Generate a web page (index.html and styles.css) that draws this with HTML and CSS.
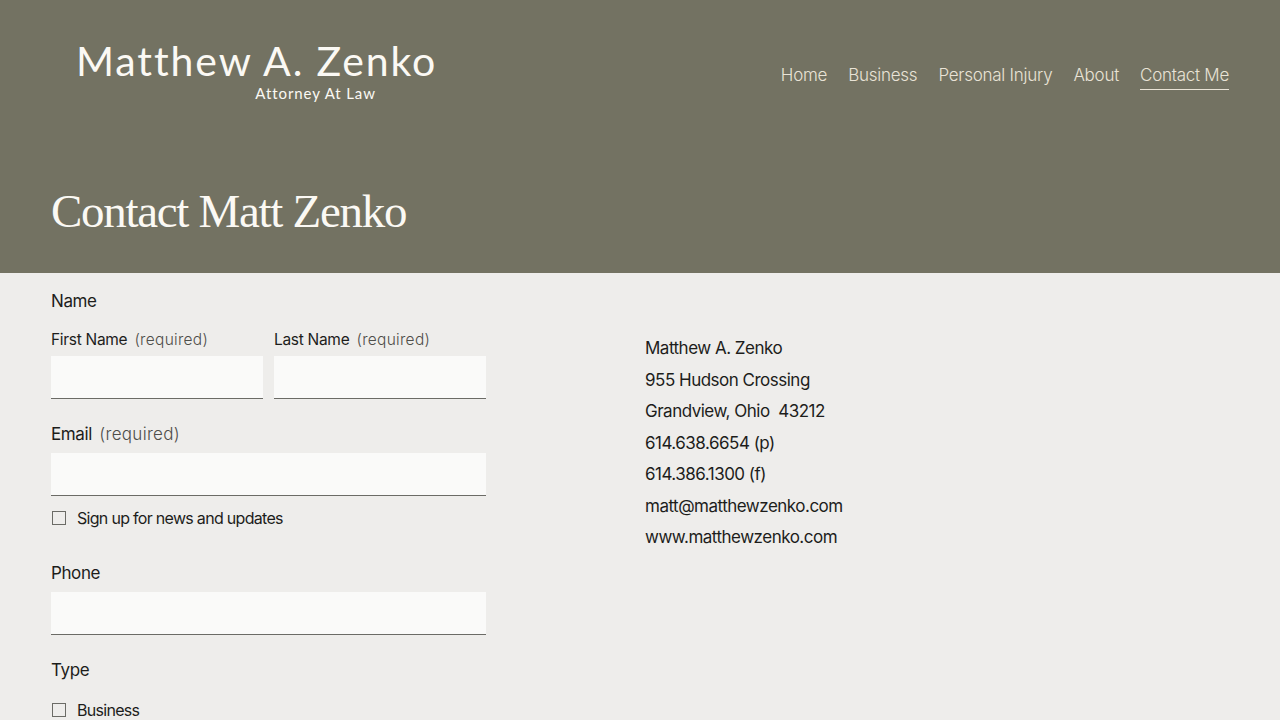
FILE: index.html
```html
<!DOCTYPE html>
<html lang="en">

<head>
    <meta charset="UTF-8">
    <meta name="viewport" content="width=device-width, initial-scale=1.0">
    <title>Contact Me | Matthew A. Zenko</title>
    <link rel="stylesheet" href="styles.css">
</head>

<body>
    <header class="top">
        <div class="bar">
            <a class="logo" href="#">
                <span class="logo-name">Matthew A. Zenko</span>
                <span class="logo-tag">Attorney At Law</span>
            </a>
            <nav class="menu">
                <a href="#">Home</a>
                <a href="#">Business</a>
                <a href="#">Personal Injury</a>
                <a href="#">About</a>
                <a href="#" class="active">Contact Me</a>
            </nav>
        </div>
        <h1 class="title">Contact Matt Zenko</h1>
    </header>

    <main class="contact">
        <form class="form">
            <fieldset class="group">
                <legend class="label">Name</legend>
                <div class="pair">
                    <label class="field">
                        <span class="sub">First Name <em>(required)</em></span>
                        <input type="text">
                    </label>
                    <label class="field">
                        <span class="sub">Last Name <em>(required)</em></span>
                        <input type="text">
                    </label>
                </div>
            </fieldset>

            <label class="field wide">
                <span class="label">Email <em>(required)</em></span>
                <input type="email">
            </label>
            <label class="check">
                <input type="checkbox">
                <span>Sign up for news and updates</span>
            </label>

            <label class="field wide phone">
                <span class="label">Phone</span>
                <input type="tel">
            </label>

            <fieldset class="group type">
                <legend class="label">Type</legend>
                <label class="check">
                    <input type="checkbox">
                    <span>Business</span>
                </label>
            </fieldset>
        </form>

        <address class="info">
            <p>Matthew A. Zenko</p>
            <p>955 Hudson Crossing</p>
            <p>Grandview, Ohio&nbsp; 43212</p>
            <p>614.638.6654 (p)</p>
            <p>614.386.1300 (f)</p>
            <p>matt@matthewzenko.com</p>
            <p>www.matthewzenko.com</p>
        </address>
    </main>
</body>

</html>
```

FILE: styles.css
```css
* {
    padding: 0;
    margin: 0;
    box-sizing: border-box;
}

body {
    background-color: #eeedeb;
    color: #1d1d1b;
    font-family: Inter, "Liberation Sans", sans-serif;
    height: 720px;
    overflow: hidden;
}

a {
    color: inherit;
    text-decoration: none;
}

/* header */

.top {
    background-color: #737262;
    height: 273px;
    padding: 0 51px;
}

.bar {
    display: flex;
    justify-content: space-between;
    align-items: flex-start;
    padding-top: 38px;
}

.logo {
    display: flex;
    flex-direction: column;
    align-items: center;
    margin-left: 25px;
    color: #fbf9f4;
}

.logo-name {
    font-family: Lato, sans-serif;
    font-size: 41px;
    letter-spacing: 1.9px;
    line-height: 46px;
}

.logo-tag {
    font-family: Lato, sans-serif;
    font-size: 15px;
    letter-spacing: 0.9px;
    line-height: 18px;
    margin-left: 118px;
}

.menu {
    display: flex;
    gap: 21px;
    margin-top: 26px;
}

.menu a {
    color: #e9e3d6;
    font-size: 17px;
    font-weight: 300;
    letter-spacing: -0.25px;
    line-height: 22px;
    padding-bottom: 3px;
    border-bottom: 1px solid transparent;
}

.menu a.active {
    border-bottom-color: #e9e3d6;
}

.title {
    font-family: "Liberation Serif", serif;
    font-weight: 400;
    font-size: 47px;
    letter-spacing: -1.3px;
    color: #fbf9f4;
    margin-top: 81px;
    line-height: 56px;
}

/* form + address */

.contact {
    display: grid;
    grid-template-columns: 435px 1fr;
    column-gap: 159px;
    padding: 15px 51px 0;
}

.form {
    display: flex;
    flex-direction: column;
}

.group {
    border: none;
    min-width: 0;
}

.label {
    font-size: 17px;
    letter-spacing: -0.4px;
    line-height: 26px;
    padding-bottom: 16px;
}

.label em,
.sub em {
    font-style: normal;
    font-weight: 300;
    color: #4e4e4a;
    margin-left: 3px;
    letter-spacing: 0.3px;
}

.pair {
    display: flex;
    gap: 11px;
}

.pair .field {
    flex: 1;
    min-width: 0;
}

.field {
    display: flex;
    flex-direction: column;
}

.sub {
    font-size: 15.5px;
    letter-spacing: -0.3px;
    line-height: 20px;
    margin-bottom: 6px;
}

.sub em {
    font-size: 15.5px;
}

.field input {
    width: 100%;
    height: 43px;
    border: none;
    border-bottom: 1px solid #6b6b66;
    background-color: #fafaf9;
    outline: none;
    font-size: 16px;
    padding: 0 12px;
}

.field.wide {
    margin-top: 22px;
}

.field.wide .label {
    padding-bottom: 6px;
}

.check {
    display: flex;
    align-items: center;
    gap: 11px;
    margin-top: 11px;
    font-size: 16px;
    letter-spacing: -0.7px;
    line-height: 22px;
}

.check input {
    appearance: none;
    width: 14px;
    height: 14px;
    border: 1px solid #6b6b66;
    background: transparent;
    margin-left: 1px;
}

.phone {
    margin-top: 31px !important;
}

.type {
    margin-top: 22px;
}

.type .label {
    padding-bottom: 0;
}

.type .check {
    margin-top: 16px;
}

.info {
    font-style: normal;
    font-size: 17px;
    letter-spacing: -0.5px;
    line-height: 31.5px;
    padding-top: 45px;
}
```
